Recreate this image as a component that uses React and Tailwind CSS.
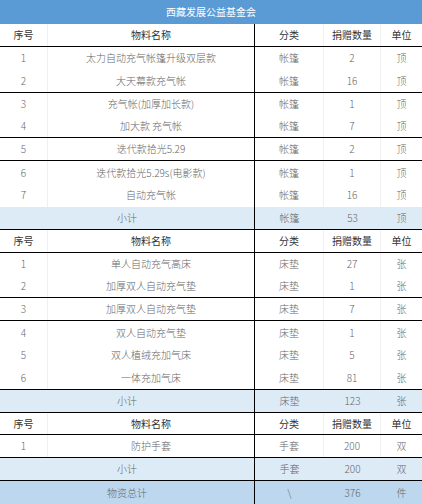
import React from 'react';

const cols = 'grid grid-cols-[48px_206px_70px_57px_41px]';

const sections = [
  {
    items: [
      ['1', '太力自动充气帐篷升级双层款', '帐篷', '2', '顶', false],
      ['2', '大天幕款充气帐', '帐篷', '16', '顶', true],
      ['3', '充气帐(加厚加长款)', '帐篷', '1', '顶', false],
      ['4', '加大款 充气帐', '帐篷', '7', '顶', true],
      ['5', '迭代款拾光5.29', '帐篷', '2', '顶', true],
      ['6', '迭代款拾光5.29s(电影款)', '帐篷', '1', '顶', false],
      ['7', '自动充气帐', '帐篷', '16', '顶', false],
    ],
    sub: ['帐篷', '53', '顶'],
  },
  {
    items: [
      ['1', '单人自动充气高床', '床垫', '27', '张', false],
      ['2', '加厚双人自动充气垫', '床垫', '1', '张', true],
      ['3', '加厚双人自动充气垫', '床垫', '7', '张', true],
      ['4', '双人自动充气垫', '床垫', '1', '张', false],
      ['5', '双人植绒充加气床', '床垫', '5', '张', false],
      ['6', '一体充加气床', '床垫', '81', '张', true],
    ],
    sub: ['床垫', '123', '张'],
  },
  {
    items: [['1', '防护手套', '手套', '200', '双', true]],
    sub: ['手套', '200', '双'],
  },
];

const Row = ({ cells, line, head = false }) => (
  <div
    className={`${cols} h-[22.86px] ${line ? 'border-b-[1.5px] border-black' : ''} ${
      head ? 'text-[#333]' : 'text-[#666] font-light'
    }`}
  >
    <div className="flex items-center justify-center border-r border-[#f0f0f0]">{cells[0]}</div>
    <div className="flex items-center justify-center">{cells[1]}</div>
    <div className="flex items-center justify-center border-l-[1.5px] border-black border-r border-r-[#f0f0f0]">{cells[2]}</div>
    <div className="flex items-center justify-center border-r border-[#f0f0f0]">{cells[3]}</div>
    <div className="flex items-center justify-center">{cells[4]}</div>
  </div>
);

const SumRow = ({ label, cells, line, bg }) => (
  <div className={`${cols} h-[22.86px] ${bg} text-[#666] font-light ${line ? 'border-b-[1.5px] border-black' : ''}`}>
    <div className="col-span-2 flex items-center justify-center">{label}</div>
    <div className="flex items-center justify-center border-l-[1.5px] border-black">{cells[0]}</div>
    <div className="flex items-center justify-center">{cells[1]}</div>
    <div className="flex items-center justify-center">{cells[2]}</div>
  </div>
);

export default function App() {
  return (
    <div
      className="w-[422px] h-[504px] bg-white text-[10px] leading-none overflow-hidden"
      style={{ fontFamily: '"Noto Sans CJK SC", "Noto Sans", sans-serif' }}
    >
      <div className="h-[24px] bg-[#5b9bd5] text-white flex items-center justify-center">西藏发展公益基金会</div>
      {sections.map((s, i) => (
        <div key={i}>
          <Row head line cells={['序号', '物料名称', '分类', '捐赠数量', '单位']} />
          {s.items.map((it) => (
            <Row key={it[0]} cells={it} line={it[5]} />
          ))}
          <SumRow label="小计" cells={s.sub} line bg="bg-[#ddebf7]" />
        </div>
      ))}
      <SumRow label="物资总计" cells={['\\', '376', '件']} bg="bg-[#bdd7ee]" />
    </div>
  );
}
